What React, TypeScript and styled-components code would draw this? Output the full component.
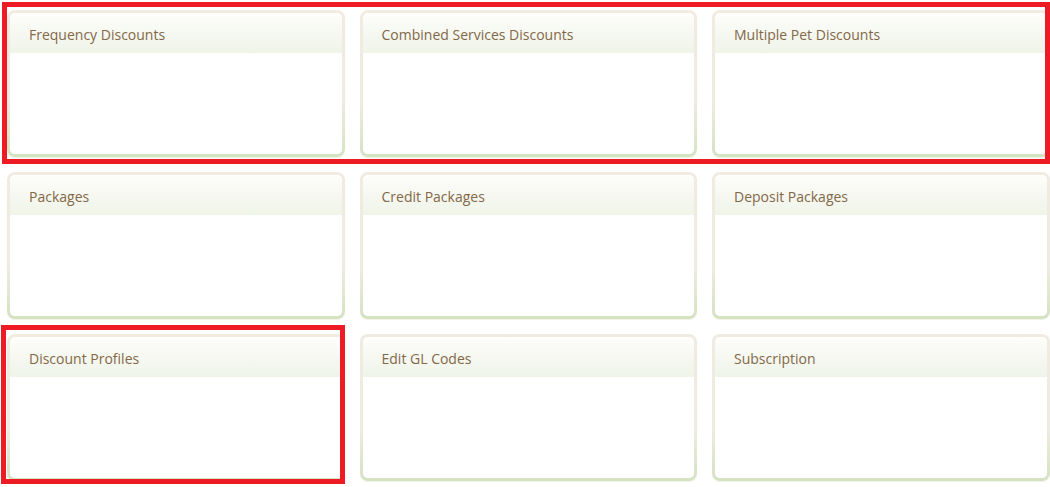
import React from 'react'
import styled, { createGlobalStyle } from 'styled-components'

const GlobalStyle = createGlobalStyle`
  html, body {
    margin: 0;
    padding: 0;
    background: #ffffff;
  }
  body {
    font-family: 'Open Sans', 'Noto Sans', 'Liberation Sans', sans-serif;
  }
`

const tiles = [
  'Frequency Discounts',
  'Combined Services Discounts',
  'Multiple Pet Discounts',
  'Packages',
  'Credit Packages',
  'Deposit Packages',
  'Discount Profiles',
  'Edit GL Codes',
  'Subscription',
]

const App: React.FC = () => {
  return (
    <>
      <GlobalStyle />
      <Page>
        <Grid>
          {tiles.map((title) => (
            <Card key={title}>
              <Panel>
                <Header>{title}</Header>
                <Body />
              </Panel>
            </Card>
          ))}
        </Grid>
        <Highlight $top={2} $left={2} $width={1048} $height={162} />
        <Highlight $top={325} $left={1} $width={344} $height={159} />
      </Page>
    </>
  )
}

const Page = styled.div`
  position: relative;
  width: 1050px;
  height: 487px;
  overflow: hidden;
`

const Grid = styled.div`
  display: grid;
  grid-template-columns: repeat(3, 337.5px);
  grid-template-rows: repeat(3, 147px);
  column-gap: 15px;
  row-gap: 15px;
  padding: 10px 0 0 7px;
`

const Card = styled.div`
  padding: 3px;
  border-radius: 8px;
  background: linear-gradient(to bottom, #f1ebe2 0%, #eeebe0 65%, #d4e2c1 100%);
  box-shadow: 0 1px 1px rgba(200, 210, 180, 0.3);
  display: flex;
`

const Panel = styled.div`
  flex: 1;
  display: flex;
  flex-direction: column;
  border-radius: 5px;
  overflow: hidden;
  background: #ffffff;
`

const Header = styled.div`
  height: 40px;
  flex-shrink: 0;
  display: flex;
  align-items: center;
  padding: 3px 0 0 19px;
  box-sizing: border-box;
  background: linear-gradient(to bottom, #fefefb 0%, #f6f8f1 50%, #eff4e8 100%);
  color: #836848;
  font-size: 14px;
`

const Body = styled.div`
  flex: 1;
  background: #ffffff;
`

const Highlight = styled.div<{ $top: number; $left: number; $width: number; $height: number }>`
  position: absolute;
  top: ${(p) => p.$top}px;
  left: ${(p) => p.$left}px;
  width: ${(p) => p.$width}px;
  height: ${(p) => p.$height}px;
  box-sizing: border-box;
  border: 5px solid #ed1c24;
  pointer-events: none;
`

export default App
